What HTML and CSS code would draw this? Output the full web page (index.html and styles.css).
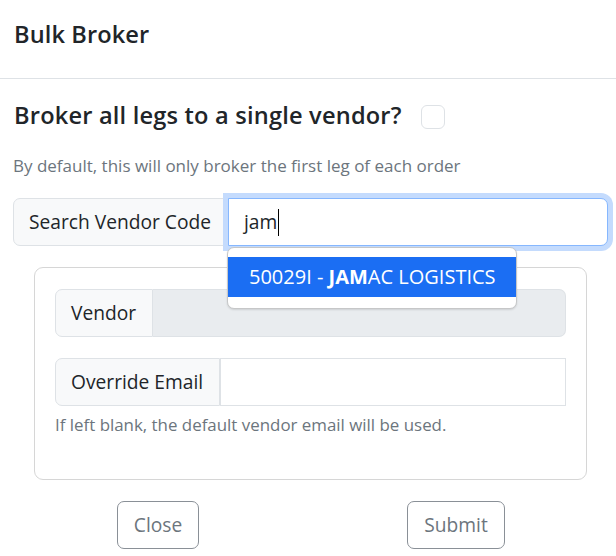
FILE: index.html
```html
<!DOCTYPE html>
<html lang="en">
<head>
<meta charset="utf-8">
<title>Bulk Broker</title>
<link rel="stylesheet" href="styles.css">
</head>
<body>
<div class="modal">
  <header class="modal-header">
    <h5 class="modal-title">Bulk Broker</h5>
  </header>
  <div class="modal-body">
    <div class="legs-row">
      <h5 class="legs-title">Broker all legs to a single vendor?</h5>
      <span class="check"></span>
    </div>
    <p class="muted">By default, this will only broker the first leg of each order</p>

    <div class="input-group">
      <span class="addon">Search Vendor Code</span>
      <div class="search-wrap">
        <div class="field focused">jam<span class="caret"></span></div>
        <ul class="dropdown">
          <li class="dropdown-item active">50029I - <b>JAM</b>AC LOGISTICS</li>
        </ul>
      </div>
    </div>

    <div class="card">
      <div class="input-group">
        <span class="addon">Vendor</span>
        <div class="field disabled"></div>
      </div>
      <div class="input-group gap-top">
        <span class="addon">Override Email</span>
        <div class="field square"></div>
      </div>
      <div class="form-text">If left blank, the default vendor email will be used.</div>
    </div>

    <div class="actions">
      <button class="btn">Close</button>
      <button class="btn">Submit</button>
    </div>
  </div>
</div>
</body>
</html>
```

FILE: styles.css
```css
* { box-sizing: border-box; }

html, body {
  margin: 0;
  padding: 0;
  background: #ffffff;
}

body {
  font-family: "Open Sans", "Noto Sans", sans-serif;
  font-size: 19.2px;
  line-height: 28.8px;
  color: #212529;
  width: 616px;
  height: 556px;
  overflow: hidden;
}

.modal-header {
  padding: 16px 13px 26px 14px;
  border-bottom: 1px solid #dee2e6;
  height: 79px;
}

.modal-title,
.legs-title {
  margin: 0;
  font-size: 23.6px;
  line-height: 36px;
  font-weight: 600;
  letter-spacing: 0.1px;
}

.legs-title {
  letter-spacing: 0.2px;
}

.modal-body {
  padding: 18px 8px 0 13px;
}

.legs-row {
  display: flex;
  align-items: flex-start;
  padding-left: 1px;
}

.check {
  width: 24px;
  height: 24px;
  margin: 8px 0 0 19px;
  border: 1px solid #dee2e6;
  border-radius: 6px;
  background: #fff;
}

.muted {
  margin: 20px 0 0 0;
  font-size: 17px;
  line-height: 25px;
  color: #6c757d;
}

.input-group {
  display: flex;
  height: 48px;
  margin-top: 20px;
}

.addon {
  display: flex;
  align-items: center;
  padding: 0 16px 0 15px;
  background: #f8f9fa;
  border: 1px solid #dee2e6;
  border-radius: 7px 0 0 7px;
  white-space: nowrap;
}

.field {
  flex: 1;
  height: 48px;
  display: flex;
  align-items: center;
  padding: 0 15px;
  border: 1px solid #dee2e6;
  border-left: 0;
  border-radius: 0 7px 7px 0;
  background: #fff;
}

.field.disabled {
  background: #e9ecef;
}

.field.square {
  border-radius: 0;
  border-left: 1px solid #dee2e6;
}

.search-wrap {
  position: relative;
  flex: 1;
  display: flex;
}

.field.focused {
  border: 1px solid #86b7fe;
  box-shadow: 0 0 0 5px #c4dbfd;
  position: relative;
  z-index: 1;
}

.caret {
  display: inline-block;
  width: 1px;
  height: 27px;
  background: #000;
  margin-left: 1px;
}

.dropdown {
  position: absolute;
  left: -1px;
  top: 49px;
  width: 290px;
  height: 62px;
  margin: 0;
  padding: 9px 0 0 0;
  list-style: none;
  background: #fff;
  border: 1px solid #c6c7c8;
  border-radius: 7px;
  box-shadow: 0 1px 2px rgba(0, 0, 0, 0.12);
  z-index: 2;
}

.dropdown-item {
  height: 40px;
  display: flex;
  align-items: center;
  padding: 0 20px 0 21px;
  font-size: 20px;
  white-space: pre;
}

.dropdown-item.active {
  background: #1b6ef3;
  color: #fff;
}

.dropdown-item b {
  font-weight: 700;
}

.card {
  margin: 21px 21px 0 21px;
  padding: 21px 20px 42px 20px;
  border: 1px solid #d6d6d6;
  border-radius: 9px;
}

.card .input-group {
  margin-top: 0;
}

.card .input-group.gap-top {
  margin-top: 21px;
}

.form-text {
  margin-top: 6px;
  font-size: 16.9px;
  line-height: 25px;
  color: #6c757d;
}

.actions {
  display: grid;
  grid-template-columns: 1fr 1fr;
  justify-items: center;
  margin: 21px 3px 0 -4px;
}

.btn {
  font-family: inherit;
  font-size: 19.2px;
  line-height: 28.8px;
  height: 48px;
  padding: 0 16px;
  color: #6c757d;
  background: #fff;
  border: 1px solid #8a9097;
  border-radius: 7px;
}
```
